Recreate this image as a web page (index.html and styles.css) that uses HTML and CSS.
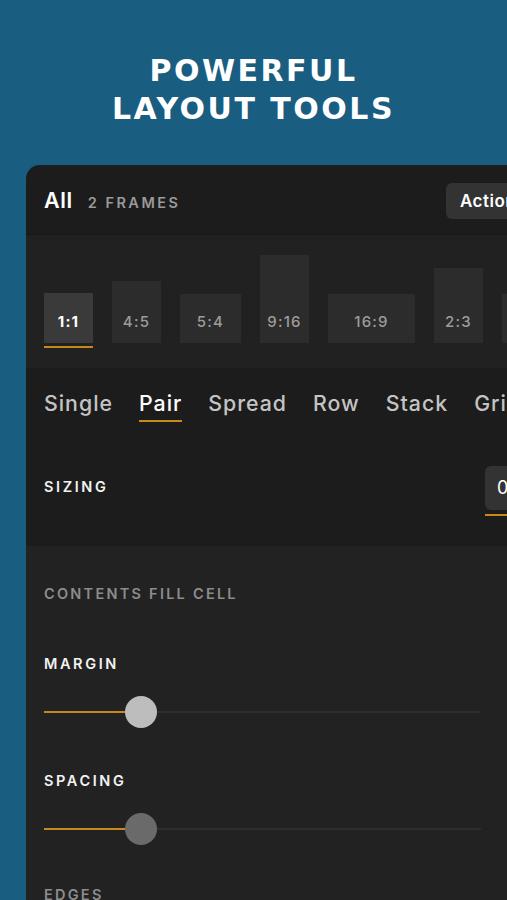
FILE: index.html
```html
<!DOCTYPE html>
<html>
<head>
<meta charset="utf-8">
<link rel="stylesheet" href="styles.css">
</head>
<body>
<div class="page">
  <h1 class="title">POWERFUL<br>LAYOUT TOOLS</h1>
  <div class="panel">
    <div class="header">
      <div class="hleft"><span class="all">All</span><span class="count">2 FRAMES</span></div>
      <div class="actions">Actions</div>
    </div>
    <div class="ratios">
      <div class="ratio sel"><div class="box" style="width:49px;height:50px">1:1</div><div class="uline"></div></div>
      <div class="ratio"><div class="box" style="width:49px;height:62px">4:5</div><div class="uline"></div></div>
      <div class="ratio"><div class="box" style="width:61px;height:49px">5:4</div><div class="uline"></div></div>
      <div class="ratio"><div class="box" style="width:49px;height:88px">9:16</div><div class="uline"></div></div>
      <div class="ratio"><div class="box" style="width:87px;height:49px">16:9</div><div class="uline"></div></div>
      <div class="ratio"><div class="box" style="width:49px;height:75px">2:3</div><div class="uline"></div></div>
      <div class="ratio"><div class="box" style="width:49px;height:49px">3:2</div><div class="uline"></div></div>
    </div>
    <div class="tabs">
      <span class="tab">Single</span>
      <span class="tab sel">Pair</span>
      <span class="tab">Spread</span>
      <span class="tab">Row</span>
      <span class="tab">Stack</span>
      <span class="tab">Grid</span>
    </div>
    <div class="sizing">
      <span class="label">SIZING</span>
      <div class="seg"><div class="segbox">0</div><div class="segline"></div></div>
    </div>
    <div class="settings">
      <div class="sub">CONTENTS FILL CELL</div>
      <div class="label lm">MARGIN</div>
      <div class="slider"><div class="fill"></div><div class="thumb light"></div></div>
      <div class="label ls">SPACING</div>
      <div class="slider"><div class="fill"></div><div class="thumb dark"></div></div>
      <div class="sub edges">EDGES</div>
    </div>
  </div>
</div>
</body>
</html>
```

FILE: styles.css
```css
html, body {
  margin: 0;
  padding: 0;
  background: #195d80;
  overflow: hidden;
  width: 507px;
  height: 900px;
}
.page {
  width: 507px;
  height: 900px;
  overflow: hidden;
}
.title {
  margin: 0;
  padding-top: 52px;
  text-align: center;
  color: #ffffff;
  font-family: "DejaVu Sans", sans-serif;
  font-weight: bold;
  font-size: 30px;
  line-height: 38px;
  letter-spacing: 2.5px;
  height: 113px;
}
.panel {
  margin-left: 26px;
  width: 600px;
  border-top-left-radius: 14px;
  background: #1c1c1c;
  overflow: hidden;
  font-family: "Inter", sans-serif;
}
.header {
  height: 70px;
  display: flex;
  align-items: center;
  padding-left: 18px;
  border-bottom: 1px solid #171717;
  box-sizing: border-box;
}
.hleft {
  display: flex;
  align-items: baseline;
  flex: 0 0 402px;
}
.all {
  color: #fff;
  font-size: 21.5px;
  font-weight: 600;
  letter-spacing: 0.6px;
  margin-right: 15px;
}
.count {
  color: #9a9a9a;
  font-size: 14.5px;
  font-weight: 600;
  letter-spacing: 2.5px;
}
.actions {
  background: #333333;
  color: #fff;
  font-size: 17px;
  font-weight: 600;
  letter-spacing: 0.5px;
  height: 36px;
  line-height: 36px;
  padding: 0 14px;
  border-radius: 6px;
  margin-top: 2px;
}
.ratios {
  background: #212121;
  height: 133px;
  display: flex;
  align-items: flex-end;
  gap: 19px;
  padding-left: 18px;
  padding-bottom: 20px;
  box-sizing: border-box;
}
.ratio {
  display: flex;
  flex-direction: column;
  gap: 3px;
}
.box {
  background: #2c2c2c;
  color: #9c9c9c;
  font-size: 15px;
  line-height: 17px;
  display: flex;
  align-items: flex-end;
  justify-content: center;
  padding-bottom: 13px;
  box-sizing: border-box;
  font-weight: 500;
  letter-spacing: 1.2px;
}
.ratio.sel .box {
  background: #3a3a3a;
  color: #fff;
  font-weight: 700;
}
.uline {
  height: 2px;
}
.ratio.sel .uline {
  background: #c7891d;
}
.tabs {
  display: flex;
  gap: 26px;
  padding-left: 18px;
  padding-top: 22px;
  height: 78px;
  box-sizing: border-box;
  white-space: nowrap;
}
.tab {
  color: #c4c4c4;
  font-size: 21.3px;
  font-weight: 500;
  letter-spacing: 1px;
  height: 30px;
  border-bottom: 2px solid transparent;
  align-self: flex-start;
}
.tab.sel {
  color: #fff;
  border-bottom-color: #c7891d;
}
.sizing {
  display: flex;
  align-items: center;
  justify-content: space-between;
  padding-left: 18px;
  height: 100px;
  box-sizing: border-box;
  padding-bottom: 20px;
}
.label {
  color: #f2f2f2;
  font-size: 14.5px;
  font-weight: 600;
  letter-spacing: 2.6px;
}
.seg {
  margin-right: 81px;
  margin-top: 10px;
  display: flex;
  flex-direction: column;
  gap: 4px;
  width: 60px;
}
.segbox {
  background: #333;
  height: 44px;
  border-radius: 6px;
  color: #fff;
  font-size: 18px;
  padding-left: 12px;
  line-height: 44px;
}
.segline {
  height: 2px;
  background: #c7891d;
  width: 40px;
}
.settings {
  background: #222222;
  padding-left: 18px;
  padding-top: 38px;
  height: 360px;
  box-sizing: border-box;
}
.sub {
  color: #8c8c8c;
  font-size: 14.5px;
  font-weight: 600;
  letter-spacing: 2.25px;
  line-height: 20px;
}
.lm {
  margin-top: 50px;
  line-height: 20px;
}
.ls {
  margin-top: 58px;
  line-height: 20px;
}
.slider {
  position: relative;
  width: 437px;
  height: 2px;
  background: #2e2e2e;
  margin-top: 37px;
}
.fill {
  width: 97px;
  height: 2px;
  background: #c7891d;
}
.thumb {
  position: absolute;
  left: 81px;
  top: -15px;
  width: 32px;
  height: 32px;
  border-radius: 50%;
}
.thumb.light { background: #bdbdbd; }
.thumb.dark { background: #6a6a6a; }
.edges {
  margin-top: 55px;
}
```
